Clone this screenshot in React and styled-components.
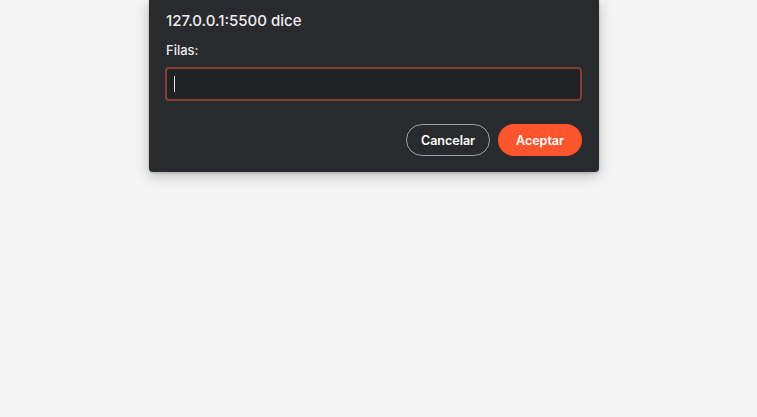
import React from "react";
import styled, { createGlobalStyle } from "styled-components";

const GlobalStyle = createGlobalStyle`
  html, body {
    margin: 0;
    padding: 0;
    background: #f4f4f4;
  }
  body {
    font-family: Inter, "Liberation Sans", Arial, sans-serif;
    -webkit-font-smoothing: antialiased;
  }
`;

const Page = styled.div`
  height: 417px;
  background: #f4f4f4;
  overflow: hidden;
`;

const Dialog = styled.div`
  width: 450px;
  margin-left: 149px;
  box-sizing: border-box;
  padding: 11px 17px 16px 16px;
  background: #292a2d;
  border-radius: 0 0 4px 4px;
  box-shadow: 0 4px 14px rgba(0, 0, 0, 0.22), 0 1px 3px rgba(0, 0, 0, 0.18);
  color: #eceef0;
`;

const Title = styled.div`
  font-size: 15px;
  line-height: 20px;
  font-weight: 500;
  margin-left: 1px;
`;

const Label = styled.label`
  display: block;
  margin-top: 11px;
  font-size: 13px;
  line-height: 16px;
  font-weight: 500;
  margin-left: 1px;
`;

const Field = styled.div`
  margin-top: 9px;
  height: 34px;
  box-sizing: border-box;
  border: 2px solid #84402f;
  border-radius: 4px;
  background: #202124;
  display: flex;
  align-items: center;
  padding-left: 7px;
`;

const Caret = styled.span`
  width: 1px;
  height: 16px;
  background: #e8eaed;
`;

const Actions = styled.div`
  display: flex;
  justify-content: flex-end;
  gap: 8px;
  margin-top: 23px;
`;

const Button = styled.button`
  width: 84px;
  height: 32px;
  box-sizing: border-box;
  border-radius: 16px;
  font-family: inherit;
  font-size: 12.5px;
  font-weight: 600;
  color: #ffffff;
  border: ${(p) => (p.$primary ? "none" : "1px solid #9aa0a6")};
  background: ${(p) => (p.$primary ? "#fe552c" : "transparent")};
  padding: 0;
`;

export default function App() {
  return (
    <Page>
      <GlobalStyle />
      <Dialog>
        <Title>127.0.0.1:5500 dice</Title>
        <Label>Filas:</Label>
        <Field>
          <Caret />
        </Field>
        <Actions>
          <Button>Cancelar</Button>
          <Button $primary>Aceptar</Button>
        </Actions>
      </Dialog>
    </Page>
  );
}
